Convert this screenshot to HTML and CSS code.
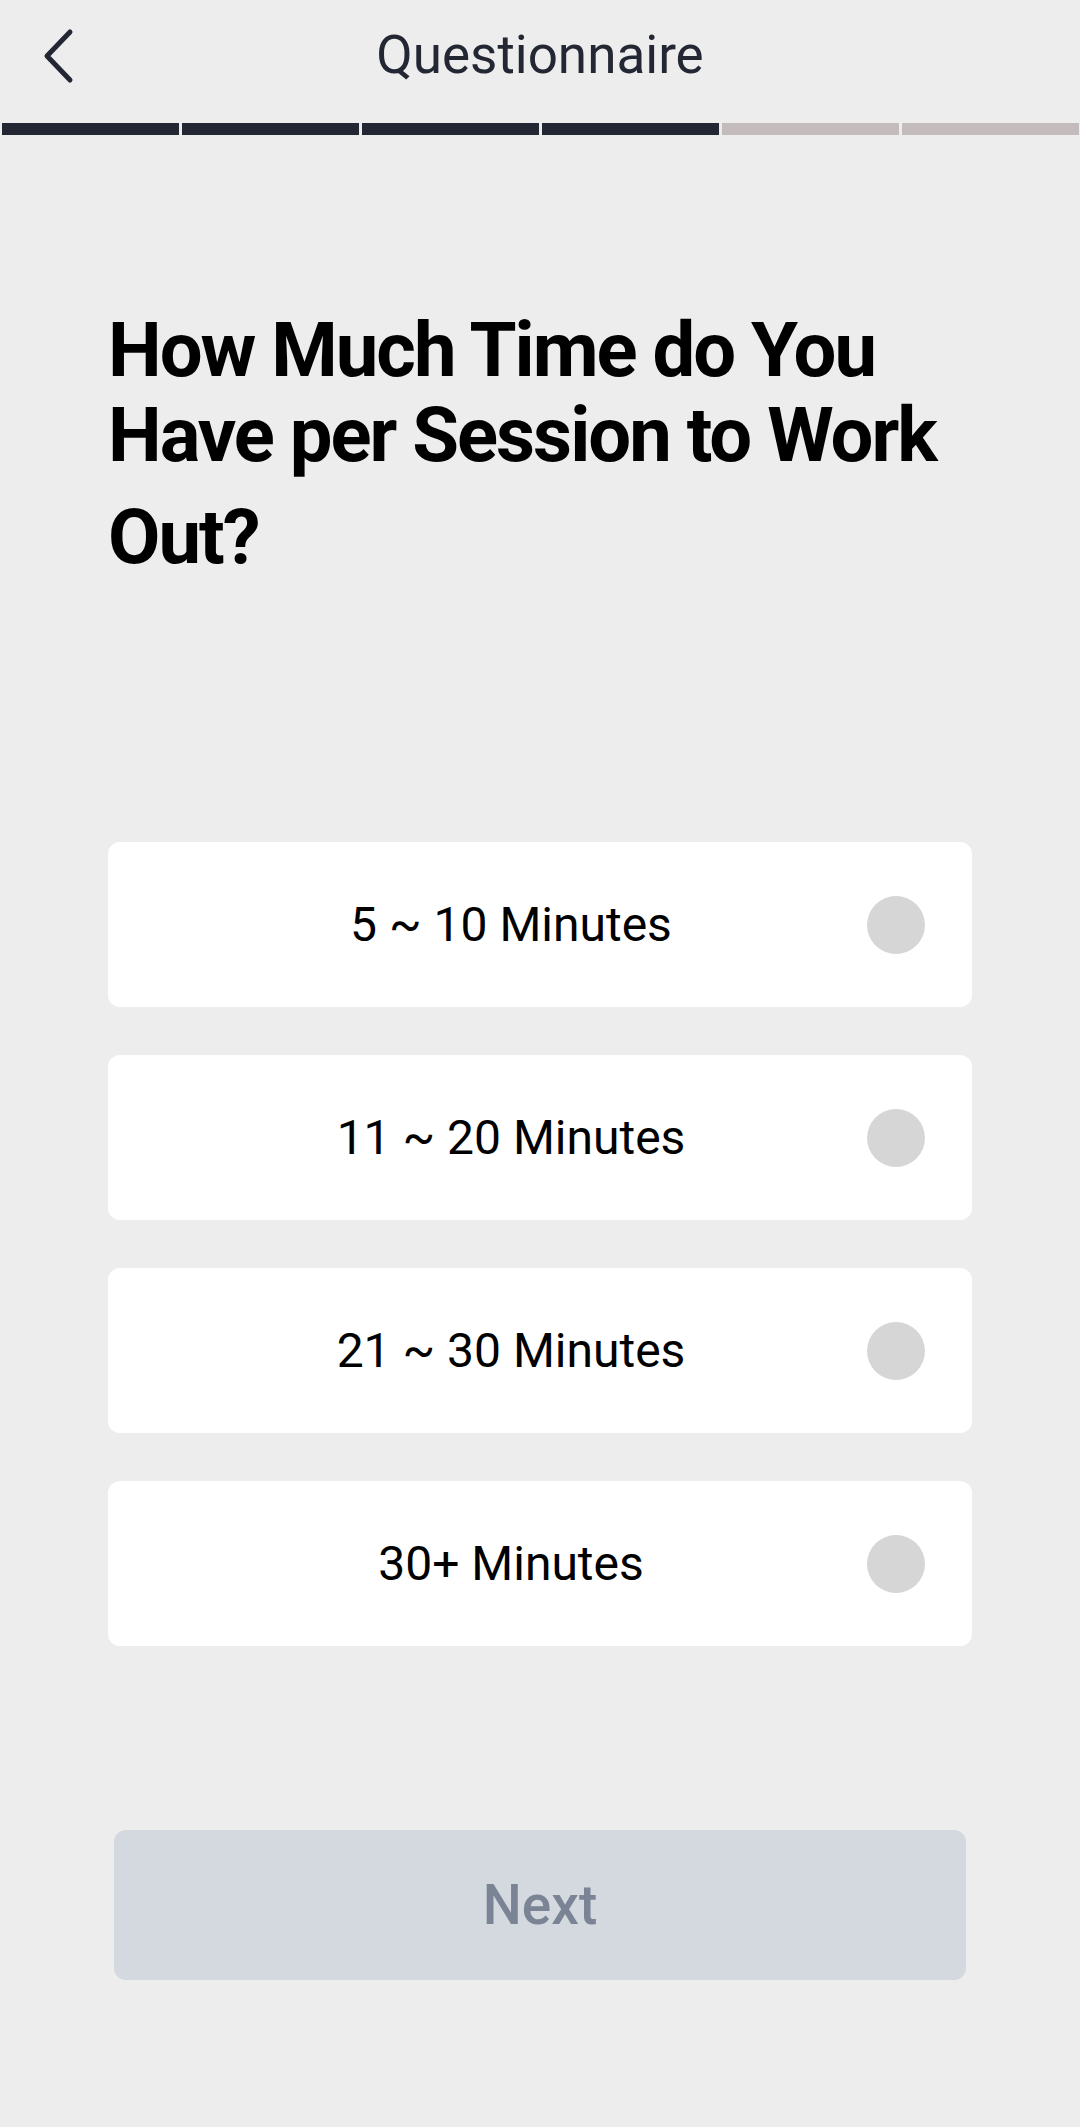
FILE: index.html
```html
<!DOCTYPE html>
<html lang="en">
<head>
<meta charset="utf-8">
<title>Questionnaire</title>
<link rel="stylesheet" href="styles.css">
</head>
<body>
<div class="screen">
  <header class="topbar">
    <button class="back" aria-label="Back">
      <svg width="40" height="56" viewBox="0 0 40 56"><path d="M28 4 L5 28 L28 52" fill="none" stroke="#232733" stroke-width="5" stroke-linecap="round" stroke-linejoin="round"/></svg>
    </button>
    <h2 class="topbar-title">Questionnaire</h2>
  </header>
  <div class="progress">
    <span class="seg done"></span>
    <span class="seg done"></span>
    <span class="seg done"></span>
    <span class="seg done"></span>
    <span class="seg"></span>
    <span class="seg"></span>
  </div>
  <main class="content">
    <h1 class="question">How Much Time do You Have per Session to Work <span class="last">Out?</span></h1>
    <ul class="options">
      <li class="option"><span class="label">5 ~ 10 Minutes</span><span class="radio"></span></li>
      <li class="option"><span class="label">11 ~ 20 Minutes</span><span class="radio"></span></li>
      <li class="option"><span class="label">21 ~ 30 Minutes</span><span class="radio"></span></li>
      <li class="option"><span class="label">30+ Minutes</span><span class="radio"></span></li>
    </ul>
    <button class="next">Next</button>
  </main>
</div>
</body>
</html>
```
FILE: styles.css
```css
* { box-sizing: border-box; }
html, body {
  margin: 0;
  padding: 0;
  background: #ededed;
  font-family: Roboto, "Liberation Sans", sans-serif;
}
.screen {
  width: 1080px;
  min-height: 2127px;
  background: #ededed;
}
.topbar {
  height: 110px;
  display: flex;
  align-items: center;
  justify-content: center;
  position: relative;
}
.back {
  position: absolute;
  left: 42px;
  top: 28px;
  width: 40px;
  height: 56px;
  padding: 0;
  border: 0;
  background: none;
}
.back svg { display: block; }
.topbar-title {
  margin: 0;
  font-size: 53px;
  font-weight: 400;
  color: #232733;
  line-height: 1;
}
.progress {
  margin-top: 13px;
  height: 12px;
  display: flex;
  gap: 3px;
  padding-left: 2px;
}
.seg {
  width: 177px;
  height: 12px;
  background: #c4bcbc;
}
.seg.done { background: #232733; }
.content {
  padding: 0 108px;
}
.question {
  margin: 173px 0 0;
  font-size: 76px;
  font-weight: 700;
  line-height: 85px;
  color: #000;
  letter-spacing: -2px;
}
.question .last {
  display: inline-block;
  line-height: 119px;
}
.options {
  list-style: none;
  margin: 245px 0 0;
  padding: 0;
  display: flex;
  flex-direction: column;
  gap: 48px;
}
.option {
  height: 165px;
  background: #fff;
  border-radius: 12px;
  display: flex;
  align-items: center;
  padding: 0 47px;
}
.label {
  flex: 1;
  text-align: center;
  font-size: 48px;
  color: #000;
}
.radio {
  width: 58px;
  height: 58px;
  border-radius: 50%;
  background: #d6d6d6;
  flex: none;
}
.next {
  display: block;
  margin: 184px 0 0 6px;
  width: 852px;
  height: 150px;
  border: 0;
  border-radius: 12px;
  background: #d4d8df;
  color: #7a8494;
  font-family: Roboto, "Liberation Sans", sans-serif;
  font-size: 55px;
  font-weight: 500;
}
```
